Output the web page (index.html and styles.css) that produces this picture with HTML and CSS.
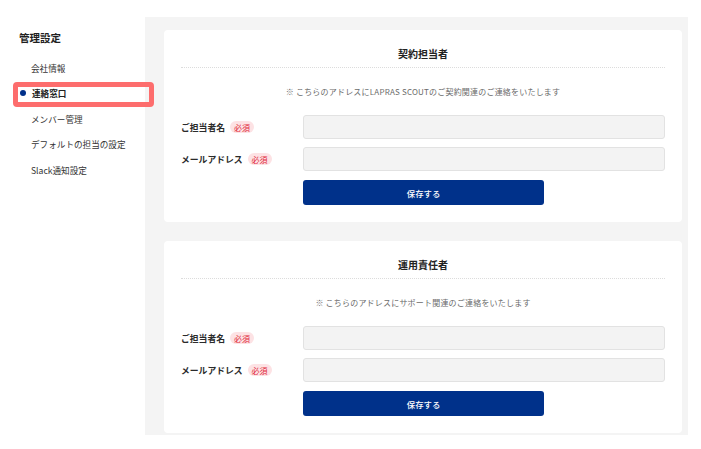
FILE: index.html
```html
<!DOCTYPE html>
<html lang="ja">
<head>
<meta charset="utf-8">
<link rel="stylesheet" href="styles.css">
</head>
<body>
<div class="page">
  <aside class="sidebar">
    <div class="side-title">管理設定</div>
    <ul class="menu">
      <li class="menu-item">会社情報</li>
      <li class="menu-item active"><span class="dot"></span>連絡窓口</li>
      <li class="menu-item">メンバー管理</li>
      <li class="menu-item">デフォルトの担当の設定</li>
      <li class="menu-item">Slack通知設定</li>
    </ul>
  </aside>
  <main class="main">
    <section class="card">
      <h2 class="card-title">契約担当者</h2>
      <p class="note">※ こちらのアドレスにLAPRAS SCOUTのご契約関連のご連絡をいたします</p>
      <div class="form">
        <div class="row">
          <div class="label">ご担当者名<span class="badge">必須</span></div>
          <div class="input"></div>
        </div>
        <div class="row">
          <div class="label">メールアドレス<span class="badge">必須</span></div>
          <div class="input"></div>
        </div>
        <div class="row btn-row">
          <div class="label"></div>
          <div class="btn-wrap"><button class="btn">保存する</button></div>
        </div>
      </div>
    </section>
    <section class="card">
      <h2 class="card-title">運用責任者</h2>
      <p class="note">※ こちらのアドレスにサポート関連のご連絡をいたします</p>
      <div class="form">
        <div class="row">
          <div class="label">ご担当者名<span class="badge">必須</span></div>
          <div class="input"></div>
        </div>
        <div class="row">
          <div class="label">メールアドレス<span class="badge">必須</span></div>
          <div class="input"></div>
        </div>
        <div class="row btn-row">
          <div class="label"></div>
          <div class="btn-wrap"><button class="btn">保存する</button></div>
        </div>
      </div>
    </section>
  </main>
</div>
</body>
</html>
```
FILE: styles.css
```css
* { box-sizing: border-box; }
html, body {
  margin: 0;
  padding: 0;
  background: #ffffff;
  font-family: "Noto Sans CJK JP", "Noto Sans", sans-serif;
  color: #2b2b2b;
}
.page {
  display: flex;
  width: 701px;
  height: 449px;
  overflow: hidden;
}
.sidebar {
  width: 145px;
  flex: none;
  padding-top: 31px;
}
.side-title {
  font-size: 10.5px;
  font-weight: 700;
  line-height: 14px;
  padding-left: 19px;
  margin-bottom: 10px;
  color: #1f1f1f;
}
.menu {
  list-style: none;
  margin: 0;
  padding: 0;
}
.menu-item {
  position: relative;
  height: 25.5px;
  display: flex;
  align-items: center;
  padding-left: 31px;
  font-size: 8.6px;
  color: #333;
}
.menu-item.active {
  font-weight: 700;
  color: #222;
  padding-left: 32px;
}
.menu-item.active::before {
  content: "";
  position: absolute;
  left: 13px;
  width: 131px;
  top: 1.2px;
  bottom: -0.8px;
  border: 5.5px solid #fd6d6d;
  border-radius: 4px;
}
.dot {
  position: absolute;
  left: 20px;
  top: 50%;
  width: 6px;
  height: 6px;
  margin-top: -3px;
  border-radius: 50%;
  background: #00308a;
}
.main {
  width: 543px;
  flex: none;
  margin-top: 17px;
  height: 418px;
  background: #f4f4f4;
  padding: 13px 6px 0 19px;
  display: flex;
  flex-direction: column;
  gap: 19px;
}
.card {
  background: #ffffff;
  border-radius: 4px;
  padding: 17px 17px 17px 17px;
  height: 192px;
  flex: none;
}
.card-title {
  margin: 0;
  font-size: 10px;
  font-weight: 700;
  line-height: 14px;
  text-align: center;
  padding-bottom: 6px;
  border-bottom: 1px dotted #dcdcdc;
  color: #222;
}
.note {
  margin: 18px 0 0;
  font-size: 8px;
  line-height: 12px;
  text-align: center;
  color: #6b6b6b;
  letter-spacing: 0.2px;
}
.form {
  margin-top: 17px;
  display: flex;
  flex-direction: column;
  gap: 8px;
}
.row {
  display: flex;
  align-items: center;
}
.btn-row { margin-top: 1px; }
.label {
  width: 122px;
  flex: none;
  display: flex;
  align-items: center;
  font-size: 8.8px;
  font-weight: 700;
  color: #2b2b2b;
}
.badge {
  display: inline-flex;
  align-items: center;
  height: 12px;
  padding: 0 4px;
  margin-left: 5px;
  border-radius: 6px;
  background: #fde2e4;
  color: #e0283a;
  font-size: 8px;
  font-weight: 400;
}
.input {
  flex: 1;
  height: 24px;
  background: #f3f3f3;
  border: 1px solid #e2e2e2;
  border-radius: 3px;
}
.btn-wrap {
  flex: 1;
}
.btn {
  display: block;
  width: 66.6%;
  height: 25px;
  border: none;
  border-radius: 3px;
  background: #00318a;
  color: #ffffff;
  font-family: "Noto Sans CJK JP", "Noto Sans", sans-serif;
  font-size: 8.4px;
  font-weight: 500;
  padding: 0;
}
```
